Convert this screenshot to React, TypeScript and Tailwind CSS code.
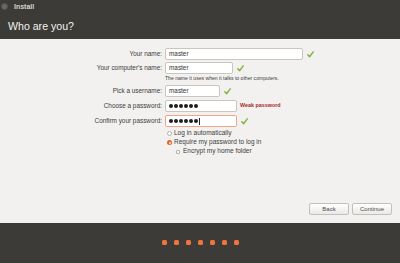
import React from "react";

const Check = () => (
  <svg width="7" height="7" viewBox="0 0 7 7" className="shrink-0">
    <path d="M0.8 3.8 L2.6 5.8 L6.2 0.9" fill="none" stroke="#86b543" strokeWidth="1.5" strokeLinecap="round" strokeLinejoin="round" />
  </svg>
);

const Dots = () => (
  <div className="flex items-center gap-[1px]">
    {[0, 1, 2, 3, 4, 5].map((i) => (
      <div key={i} className="w-[4px] h-[4px] rounded-full bg-[#1e1e1e]" />
    ))}
  </div>
);

const Row = ({ label, children, className = "" }: { label: string; children: React.ReactNode; className?: string }) => (
  <div className={`flex items-center h-[12px] ${className}`}>
    <div className="w-[162px] text-right text-[6.4px] text-[#3c3c3c] leading-none">{label}</div>
    <div className="flex items-center ml-[3px] gap-[4px]">{children}</div>
  </div>
);

const Field = ({ w, children, focus = false }: { w: string; children: React.ReactNode; focus?: boolean }) => (
  <div
    className={`${w} h-[12px] flex items-center pl-[3px] bg-white rounded-[2px] border ${
      focus ? "border-[#f2a585]" : "border-[#c9c6c1]"
    } text-[6.4px] text-[#333] leading-none`}
  >
    {children}
  </div>
);

export default function App() {
  return (
    <div className="w-[400px] h-[263px] flex flex-col bg-[#3c3b37] overflow-hidden" style={{ fontFamily: '"Liberation Sans", Arial, sans-serif' }}>
      <div className="h-[13px] flex items-center">
        <div className="ml-[1px] w-[7px] h-[7px] rounded-full bg-[#6a6862] border border-[#55534e]" />
        <span className="ml-[6px] text-[7px] font-bold text-[#d8d4cc] leading-none">Install</span>
      </div>
      <div className="h-[26px] flex items-center pl-[8px]">
        <span className="text-[10.6px] text-[#f2f1ef] leading-none">Who are you?</span>
      </div>

      <div className="h-[184px] bg-[#f2f1f0] flex flex-col">
        <div className="flex flex-col pt-[9px]">
          <Row label="Your name:">
            <Field w="w-[138px]">master</Field>
            <Check />
          </Row>
          <Row label="Your computer's name:" className="mt-[2px]">
            <Field w="w-[68px]">master</Field>
            <Check />
          </Row>
          <div className="ml-[165px] mt-[1px] h-[7px] flex items-center text-[5.1px] text-[#3c3c3c] leading-none">
            The name it uses when it talks to other computers.
          </div>
          <Row label="Pick a username:" className="mt-[3px]">
            <Field w="w-[55px]">master</Field>
            <Check />
          </Row>
          <Row label="Choose a password:" className="mt-[3px]">
            <Field w="w-[72px]">
              <Dots />
            </Field>
            <span className="-ml-[1px] text-[5.4px] font-bold text-[#a52a2a] leading-none">Weak password</span>
          </Row>
          <Row label="Confirm your password:" className="mt-[3px]">
            <Field w="w-[72px]" focus>
              <Dots />
              <div className="ml-[1px] w-[0.7px] h-[7px] bg-[#222]" />
            </Field>
            <Check />
          </Row>
          <div className="ml-[167px] mt-[2px] flex flex-col text-[6.5px] text-[#3c3c3c] leading-none">
            <div className="h-[9px] flex items-center gap-[2px]">
              <div className="w-[5px] h-[5px] rounded-full border border-[#b4b1ab] bg-white" />
              <span>Log in automatically</span>
            </div>
            <div className="h-[9px] flex items-center gap-[2px]">
              <div className="w-[5px] h-[5px] rounded-full bg-[#e9622a] flex items-center justify-center">
                <div className="w-[2px] h-[2px] rounded-full bg-[#fbe3d6]" />
              </div>
              <span>Require my password to log in</span>
            </div>
            <div className="h-[9px] flex items-center gap-[3px] ml-[9px]">
              <div className="w-[4px] h-[4px] rounded-[1px] border border-[#b4b1ab] bg-white" />
              <span>Encrypt my home folder</span>
            </div>
          </div>
        </div>

        <div className="flex-1" />
        <div className="flex justify-end gap-[3px] pr-[8px] pb-[8px]">
          <button className="w-[40px] h-[12px] rounded-[2px] border border-[#c3c0bb] bg-gradient-to-b from-white to-[#ebe9e6] text-[6px] text-[#4a4a4a] leading-none">
            Back
          </button>
          <button className="w-[40px] h-[12px] rounded-[2px] border border-[#c3c0bb] bg-gradient-to-b from-white to-[#ebe9e6] text-[6px] text-[#4a4a4a] leading-none">
            Continue
          </button>
        </div>
      </div>

      <div className="flex-1 flex items-center justify-center gap-[7px] pb-[2px]">
        {[0, 1, 2, 3, 4, 5, 6].map((i) => (
          <div key={i} className="w-[5px] h-[5px] rounded-[1.5px] bg-[#f0743e]" />
        ))}
      </div>
    </div>
  );
}
